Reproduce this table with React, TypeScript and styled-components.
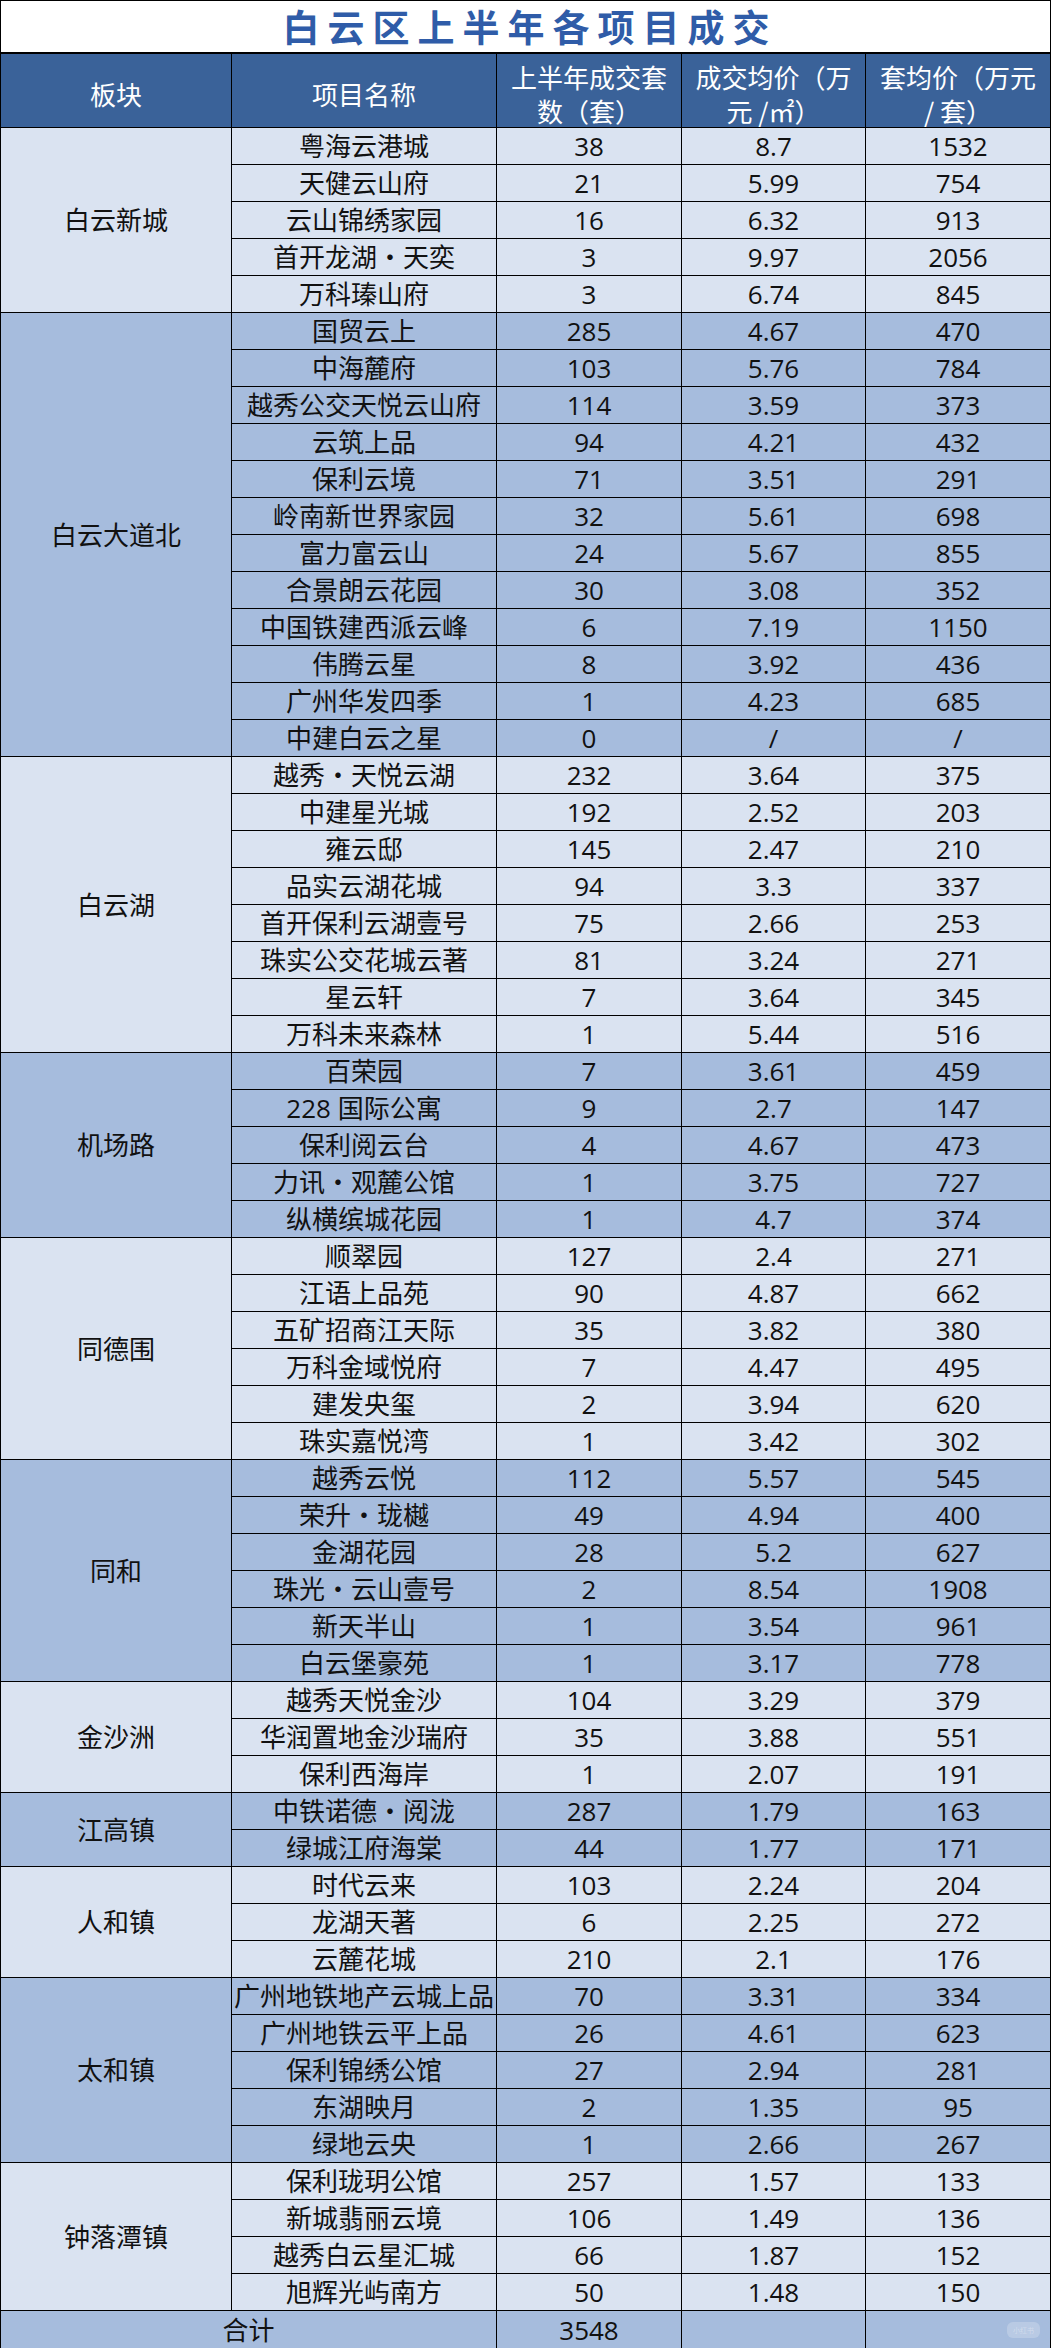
import React from 'react';
import styled, { createGlobalStyle } from 'styled-components';

type Project = [string, string, string, string];

interface Block {
  name: string;
  projects: Project[];
}

const blocks: Block[] = [
  {
    name: '白云新城',
    projects: [
      ['粤海云港城', '38', '8.7', '1532'],
      ['天健云山府', '21', '5.99', '754'],
      ['云山锦绣家园', '16', '6.32', '913'],
      ['首开龙湖・天奕', '3', '9.97', '2056'],
      ['万科瑧山府', '3', '6.74', '845'],
    ],
  },
  {
    name: '白云大道北',
    projects: [
      ['国贸云上', '285', '4.67', '470'],
      ['中海麓府', '103', '5.76', '784'],
      ['越秀公交天悦云山府', '114', '3.59', '373'],
      ['云筑上品', '94', '4.21', '432'],
      ['保利云境', '71', '3.51', '291'],
      ['岭南新世界家园', '32', '5.61', '698'],
      ['富力富云山', '24', '5.67', '855'],
      ['合景朗云花园', '30', '3.08', '352'],
      ['中国铁建西派云峰', '6', '7.19', '1150'],
      ['伟腾云星', '8', '3.92', '436'],
      ['广州华发四季', '1', '4.23', '685'],
      ['中建白云之星', '0', '/', '/'],
    ],
  },
  {
    name: '白云湖',
    projects: [
      ['越秀・天悦云湖', '232', '3.64', '375'],
      ['中建星光城', '192', '2.52', '203'],
      ['雍云邸', '145', '2.47', '210'],
      ['品实云湖花城', '94', '3.3', '337'],
      ['首开保利云湖壹号', '75', '2.66', '253'],
      ['珠实公交花城云著', '81', '3.24', '271'],
      ['星云轩', '7', '3.64', '345'],
      ['万科未来森林', '1', '5.44', '516'],
    ],
  },
  {
    name: '机场路',
    projects: [
      ['百荣园', '7', '3.61', '459'],
      ['228 国际公寓', '9', '2.7', '147'],
      ['保利阅云台', '4', '4.67', '473'],
      ['力讯・观麓公馆', '1', '3.75', '727'],
      ['纵横缤城花园', '1', '4.7', '374'],
    ],
  },
  {
    name: '同德围',
    projects: [
      ['顺翠园', '127', '2.4', '271'],
      ['江语上品苑', '90', '4.87', '662'],
      ['五矿招商江天际', '35', '3.82', '380'],
      ['万科金域悦府', '7', '4.47', '495'],
      ['建发央玺', '2', '3.94', '620'],
      ['珠实嘉悦湾', '1', '3.42', '302'],
    ],
  },
  {
    name: '同和',
    projects: [
      ['越秀云悦', '112', '5.57', '545'],
      ['荣升・珑樾', '49', '4.94', '400'],
      ['金湖花园', '28', '5.2', '627'],
      ['珠光・云山壹号', '2', '8.54', '1908'],
      ['新天半山', '1', '3.54', '961'],
      ['白云堡豪苑', '1', '3.17', '778'],
    ],
  },
  {
    name: '金沙洲',
    projects: [
      ['越秀天悦金沙', '104', '3.29', '379'],
      ['华润置地金沙瑞府', '35', '3.88', '551'],
      ['保利西海岸', '1', '2.07', '191'],
    ],
  },
  {
    name: '江高镇',
    projects: [
      ['中铁诺德・阅泷', '287', '1.79', '163'],
      ['绿城江府海棠', '44', '1.77', '171'],
    ],
  },
  {
    name: '人和镇',
    projects: [
      ['时代云来', '103', '2.24', '204'],
      ['龙湖天著', '6', '2.25', '272'],
      ['云麓花城', '210', '2.1', '176'],
    ],
  },
  {
    name: '太和镇',
    projects: [
      ['广州地铁地产云城上品', '70', '3.31', '334'],
      ['广州地铁云平上品', '26', '4.61', '623'],
      ['保利锦绣公馆', '27', '2.94', '281'],
      ['东湖映月', '2', '1.35', '95'],
      ['绿地云央', '1', '2.66', '267'],
    ],
  },
  {
    name: '钟落潭镇',
    projects: [
      ['保利珑玥公馆', '257', '1.57', '133'],
      ['新城翡丽云境', '106', '1.49', '136'],
      ['越秀白云星汇城', '66', '1.87', '152'],
      ['旭辉光屿南方', '50', '1.48', '150'],
    ],
  },
];

const App: React.FC = () => (
  <>
    <GlobalStyle />
    <StyledSheet>
      <StyledTitle>白云区上半年各项目成交</StyledTitle>
      <StyledGrid>
        <StyledHead>板块</StyledHead>
        <StyledHead>项目名称</StyledHead>
        <StyledHead>
          上半年成交套
          <br />
          数（套）
        </StyledHead>
        <StyledHead>
          成交均价（万
          <br />
          元 /㎡）
        </StyledHead>
        <StyledHead>
          套均价（万元
          <br />
          / 套）
        </StyledHead>
        {blocks.map((block, blockIndex) => {
          const dark = blockIndex % 2 === 1;
          return (
            <React.Fragment key={block.name}>
              <StyledCell $dark={dark} $span={block.projects.length}>
                {block.name}
              </StyledCell>
              {block.projects.map((project) =>
                project.map((value, index) => (
                  <StyledCell key={`${project[0]}-${index}`} $dark={dark}>
                    {value}
                  </StyledCell>
                )),
              )}
            </React.Fragment>
          );
        })}
        <StyledCell $dark $cols={2} $last>
          合计
        </StyledCell>
        <StyledCell $dark $last>
          3548
        </StyledCell>
        <StyledCell $dark $last />
        <StyledCell $dark $last>
          <StyledWatermark>小红书</StyledWatermark>
        </StyledCell>
      </StyledGrid>
    </StyledSheet>
  </>
);

export default App;

const GlobalStyle = createGlobalStyle`
  html, body {
    margin: 0;
    padding: 0;
    background: #ffffff;
  }
  body {
    font-family: "Open Sans", "Noto Sans CJK SC", sans-serif;
  }
`;

const StyledSheet = styled.div`
  width: 1051px;
  box-sizing: border-box;
  background: #ffffff;
`;

const StyledTitle = styled.div`
  height: 54px;
  box-sizing: border-box;
  border: 1px solid #000;
  border-bottom-width: 2px;
  display: flex;
  align-items: center;
  justify-content: center;
  padding-left: 9px;
  padding-bottom: 2px;
  font-family: "Noto Sans CJK SC", sans-serif;
  font-weight: 700;
  font-size: 37px;
  letter-spacing: 8px;
  color: #2f5ca8;
`;

const StyledGrid = styled.div`
  display: grid;
  grid-template-columns: 231px 265px 185px 184px 185px;
  grid-template-rows: 74px;
  grid-auto-rows: 37px;
  border-left: 1px solid #000;
  box-sizing: border-box;
`;

const StyledHead = styled.div`
  box-sizing: border-box;
  border-right: 1px solid #000;
  border-bottom: 1px solid #000;
  background: #3a6299;
  color: #ffffff;
  display: flex;
  align-items: center;
  justify-content: center;
  text-align: center;
  padding-top: 6px;
  font-family: "Noto Sans CJK SC", sans-serif;
  font-size: 26px;
  line-height: 34px;
  white-space: nowrap;
`;

const StyledCell = styled.div<{
  $dark?: boolean;
  $span?: number;
  $cols?: number;
  $last?: boolean;
}>`
  position: relative;
  box-sizing: border-box;
  border-right: 1px solid #000;
  border-bottom: 1px solid #000;
  grid-row: ${(p) => (p.$span ? `span ${p.$span}` : 'auto')};
  grid-column: ${(p) => (p.$cols ? `span ${p.$cols}` : 'auto')};
  min-height: ${(p) => (p.$last ? '38px' : '0')};
  background: ${(p) => (p.$dark ? '#a6bcdd' : '#dae3f1')};
  color: #111;
  display: flex;
  align-items: center;
  justify-content: center;
  font-size: 26px;
  line-height: 36px;
  white-space: nowrap;
  overflow: hidden;
`;

const StyledWatermark = styled.span`
  position: absolute;
  right: 10px;
  bottom: 10px;
  width: 33px;
  height: 16px;
  border-radius: 6px;
  background: rgba(255, 255, 255, 0.22);
  color: rgba(255, 255, 255, 0.35);
  font-size: 7px;
  line-height: 16px;
  text-align: center;
  font-family: "Noto Sans CJK SC", sans-serif;
`;
